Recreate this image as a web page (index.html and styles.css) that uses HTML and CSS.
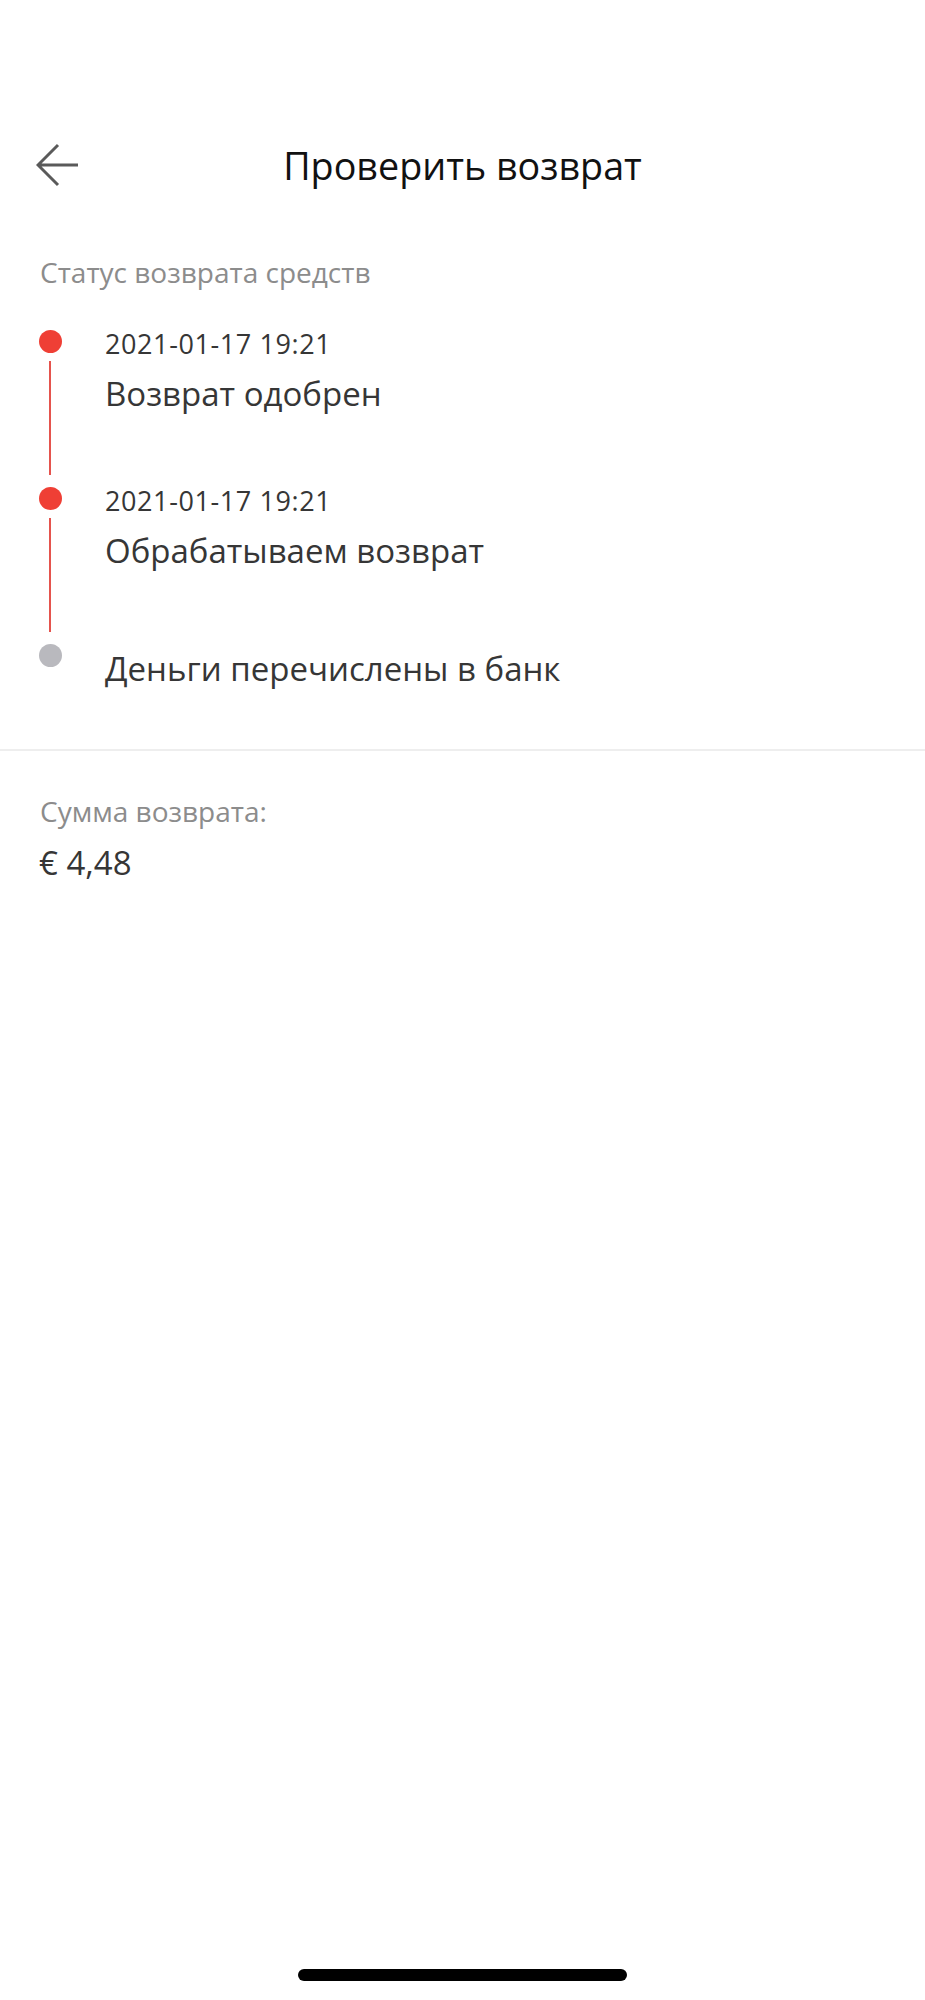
FILE: index.html
```html
<!DOCTYPE html>
<html lang="ru">
<head>
  <meta charset="UTF-8" />
  <meta name="viewport" content="width=device-width, initial-scale=1.0" />
  <title>Проверить возврат</title>
  <link rel="stylesheet" href="styles.css">
</head>
<body>
  <header class="topbar">
    <button class="back-button" aria-label="Назад">
      <svg width="44" height="44" viewBox="0 0 44 44">
        <path d="M22 2 L2 22 L22 42 M2 22 H42" fill="none" stroke="#5a5a5a" stroke-width="3" />
      </svg>
    </button>
    <h1 class="page-title">Проверить возврат</h1>
    <div class="topbar-spacer"></div>
  </header>

  <section class="refund-status">
    <div class="section-label">Статус возврата средств</div>

    <div class="timeline">
      <div class="step step-done">
        <div class="rail">
          <span class="dot"></span>
          <span class="rail-line"></span>
        </div>
        <div class="step-body">
          <div class="step-date">2021-01-17 19:21</div>
          <div class="step-title">Возврат одобрен</div>
        </div>
      </div>

      <div class="step step-done">
        <div class="rail">
          <span class="dot"></span>
          <span class="rail-line"></span>
        </div>
        <div class="step-body">
          <div class="step-date">2021-01-17 19:21</div>
          <div class="step-title">Обрабатываем возврат</div>
        </div>
      </div>

      <div class="step step-pending">
        <div class="rail">
          <span class="dot"></span>
        </div>
        <div class="step-body">
          <div class="step-title">Деньги перечислены в банк</div>
        </div>
      </div>
    </div>
  </section>

  <section class="refund-amount">
    <div class="section-label">Сумма возврата:</div>
    <div class="amount">€ 4,48</div>
  </section>

  <div class="home-indicator"></div>
</body>
</html>
```

FILE: styles.css
```css
:root {
  --text: #363636;
  --title: #111;
  --muted: #8c8c8c;
  --accent: #ef3f35;
  --accent-line: #e5534d;
  --pending: #b9b9be;
  --divider: #eeeeee;
}

body {
  font-family: "Open Sans", "Noto Sans", sans-serif;
  margin: 0;
  background: #fff;
  color: var(--text);
  min-height: 2000px;
  position: relative;
}

.topbar {
  display: grid;
  grid-template-columns: 120px 1fr 120px;
  align-items: center;
  height: 80px;
  padding-top: 123px;
}

.back-button {
  background: none;
  border: 0;
  padding: 0;
  margin-left: 36px;
  width: 44px;
  height: 44px;
  cursor: pointer;
}

.back-button svg {
  display: block;
}

.page-title {
  margin: 0;
  padding-top: 3px;
  text-align: center;
  font-size: 37.7px;
  font-weight: 400;
  line-height: 80px;
  color: var(--title);
}

.refund-status {
  padding: 51px 40px 60px 38px;
  border-bottom: 2px solid var(--divider);
}

.section-label {
  font-size: 28px;
  line-height: 36px;
  color: var(--muted);
  padding-left: 2px;
}

.timeline {
  margin-top: 37px;
}

.step {
  display: flex;
}

.step-done {
  min-height: 157px;
}

.rail {
  width: 24px;
  display: flex;
  flex-direction: column;
  align-items: center;
}

.dot {
  width: 23px;
  height: 23px;
  border-radius: 50%;
  margin-top: 3px;
  background: var(--accent);
  flex-shrink: 0;
}

.step-pending .dot {
  background: var(--pending);
}

.rail-line {
  flex: 1;
  width: 2px;
  margin: 8px 0 9px;
  background: var(--accent-line);
}

.step-body {
  margin-left: 43px;
}

.step-date {
  font-size: 27px;
  line-height: 34px;
  letter-spacing: 0.6px;
  color: var(--text);
}

.step-title {
  font-size: 33px;
  line-height: 40px;
  margin-top: 13px;
  color: var(--text);
}

.step-pending .step-title {
  margin-top: 8px;
}

.refund-amount {
  padding: 42px 40px 0 38px;
}

.amount {
  font-size: 33px;
  line-height: 40px;
  margin-top: 14px;
  padding-left: 1px;
}

.home-indicator {
  position: absolute;
  left: 298px;
  top: 1969px;
  width: 329px;
  height: 12px;
  border-radius: 6px;
  background: #000;
}
```
